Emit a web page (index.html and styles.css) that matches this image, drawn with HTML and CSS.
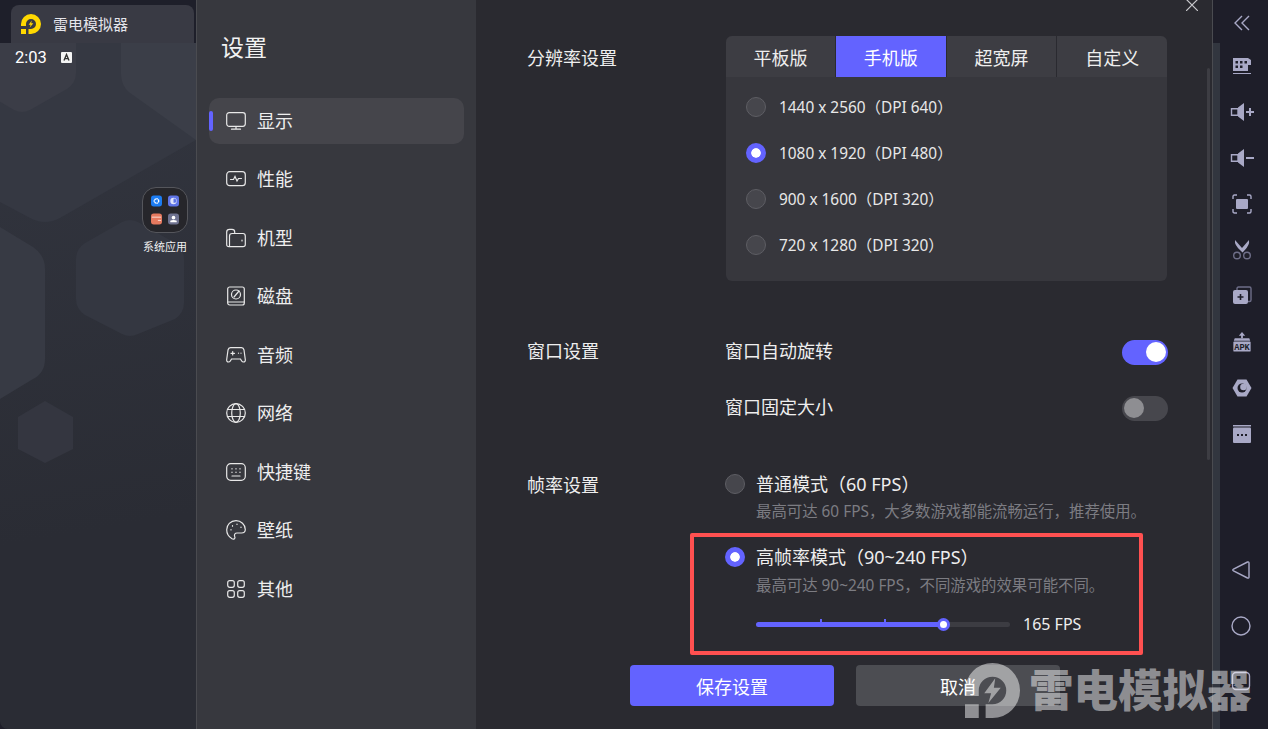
FILE: index.html
```html
<!DOCTYPE html>
<html lang="zh-CN">
<head>
  <meta charset="UTF-8">
  <title>雷电模拟器 设置</title>
  <link rel="stylesheet" href="styles.css">
</head>
<body>

<div class="app">

  <!-- android screen behind the dialog -->
  <div class="phone">
    <div class="phone-top">
      <div class="tab">
        <svg class="tab-logo" viewBox="0 0 20 20">
          <path fill="#ffd800" d="M0 12V10A10 10 0 1 1 10 20H7.5V15H10A5 5 0 1 0 5 10V12Z"/>
          <rect fill="#ffd800" x="0" y="15" width="5" height="5"/>
          <path fill="#ffd800" d="M10.8 6.5L7.6 10.8H9.6L8.8 13.6L12.4 9.2H10.2Z"/>
        </svg>
        <span>雷电模拟器</span>
      </div>
    </div>
    <div class="screen">
      <svg class="hexes" viewBox="0 0 196 686">
        <path fill="#353842" d="M-60 127L30 175Q45 183 60 175L196 97V-10H-60Z"/>
        <path fill="#3b3d47" d="M76 -10V30Q76 40 67 46L30 67Q22 71 14 67L-10 53V-10Z"/>
        <path fill="#3b3e48" d="M121 -10V30Q121 45 133 52L196 97V-10Z"/>
        <path fill="#373a44" d="M-10 178L33 204Q45 212 45 226V316Q45 330 33 336L-10 362Z"/>
        <path fill="#343741" d="M122 179Q130 175 138 179L175 200Q184 206 184 216V260Q184 270 175 276L138 291Q130 295 122 291L85 272Q76 266 76 256V216Q76 206 85 200Z"/>
        <path fill="#343640" d="M45 358L73 374V406L45 420L18 406V374Z"/>
      </svg>
      <div class="status">
        <span>2:03</span>
        <svg class="status-icon" viewBox="0 0 11 11">
          <rect width="11" height="11" rx="1" fill="#f4f4f4"/>
          <path fill="none" stroke="#333" stroke-width="1.4" d="M3 8.5L5.5 2.5L8 8.5M3.8 6.6H7.2"/>
        </svg>
      </div>
      <div class="folder">
        <div class="folder-box">
          <svg class="mini" viewBox="0 0 12 12"><rect width="12" height="12" rx="3" fill="#1c7cf2"/><circle cx="6" cy="6" r="2.400" fill="none" stroke="#fff" stroke-width="1.500" stroke-dasharray="1.500 .5"/></svg>
          <svg class="mini" viewBox="0 0 12 12"><rect width="12" height="12" rx="3" fill="#5f74e6"/><circle cx="6" cy="6" r="3.500" fill="#dfe4fb"/><path d="M6 3.500A2.500 2.500 0 0 1 8 8H6Z" fill="#5f74e6"/></svg>
          <svg class="mini" viewBox="0 0 12 12"><rect width="12" height="12" rx="3" fill="#e5795f"/><path d="M1 4H11M7.500 7.500H11" stroke="#fbe3dc" stroke-width="1"/></svg>
          <svg class="mini" viewBox="0 0 12 12"><rect width="12" height="12" rx="3" fill="#6e7290"/><circle cx="6" cy="4.500" r="2" fill="#fff"/><path d="M2.500 9.500H9.500V8Q6 6 2.500 8Z" fill="#fff"/></svg>
        </div>
        <span>系统应用</span>
      </div>
    </div>
  </div>

  <!-- settings nav -->
  <div class="side">
    <h2>设置</h2>
    <ul class="nav">
      <li class="nav-item active">
        <svg viewBox="0 0 20 20"><rect x="0.7" y="1.7" width="18.6" height="13.6" rx="2.5"/><path d="M10 15.5V18M5.5 18.2H14.500"/></svg>
        <span>显示</span>
      </li>
      <li class="nav-item">
        <svg viewBox="0 0 20 20"><rect x="0.7" y="2.7" width="18.6" height="14" rx="3"/><path d="M4.500 10.500H7.500L9 7.500L11 12L12.500 9.500H15.500"/></svg>
        <span>性能</span>
      </li>
      <li class="nav-item">
        <svg viewBox="0 0 20 20"><path d="M0.700 16.500V4Q0.700 1.300 3.500 1.300H6Q8.700 1.300 8.700 4V5.500H17Q19.300 5.500 19.300 8V16.500Q19.300 18.700 17 18.700H3Q0.700 18.700 0.700 16.500ZM3.500 18.700V8Q3.500 5.500 6 5.500H8.700M16 12V13"/></svg>
        <span>机型</span>
      </li>
      <li class="nav-item">
        <svg viewBox="0 0 20 20"><rect x="1.700" y="1" width="16.600" height="18" rx="2"/><path d="M1.700 16H18.300"/><circle cx="10" cy="8.500" r="4.500"/><path d="M8 11L13 5"/></svg>
        <span>磁盘</span>
      </li>
      <li class="nav-item">
        <svg viewBox="0 0 20 20"><path d="M4.500 2.700H15.500Q17.500 2.700 18 5L19.300 14.500Q19.500 17 17.500 17Q16.300 17 15.500 15.700L14.500 14H5.500L4.500 15.700Q3.700 17 2.500 17Q0.500 17 0.700 14.500L2 5Q2.500 2.700 4.500 2.700ZM5 8.300H8.500M6.700 6.500V10M12.500 8V8.200M15 8V8.200"/></svg>
        <span>音频</span>
      </li>
      <li class="nav-item">
        <svg viewBox="0 0 20 20"><circle cx="10" cy="10" r="9.300"/><ellipse cx="10" cy="10" rx="4.300" ry="9.300"/><path d="M1.500 6.500H18.500M1.500 13.500H18.500"/></svg>
        <span>网络</span>
      </li>
      <li class="nav-item">
        <svg viewBox="0 0 20 20"><rect x="0.700" y="1.700" width="18.600" height="16.600" rx="4"/><path d="M6 14H14M6 6.500V6.900M10 6.500V6.900M14 6.500V6.900M6 10V10.400M10 10V10.400M14 10V10.400"/></svg>
        <span>快捷键</span>
      </li>
      <li class="nav-item">
        <svg viewBox="0 0 20 20"><path d="M10 0.700C4.500 0.700 0.700 5 0.700 9.800C0.700 14 3 17 6 18.700C8 19.700 9.500 18.500 8.700 16.500C8 14.500 9 13 11 13H15.500C18 13 19.300 11.500 19.300 9.500C19.300 4.500 15 0.700 10 0.700Z"/><path d="M5 9.500V10M6.500 5.700V6.200M11 4V4.500M15 7V7.500"/></svg>
        <span>壁纸</span>
      </li>
      <li class="nav-item">
        <svg viewBox="0 0 20 20"><rect x="1.700" y="1.700" width="6.600" height="6.600" rx="2"/><rect x="11.700" y="1.700" width="6.600" height="6.600" rx="2"/><rect x="1.700" y="11.700" width="6.600" height="6.600" rx="2"/><rect x="11.700" y="11.700" width="6.600" height="6.600" rx="2"/></svg>
        <span>其他</span>
      </li>
    </ul>
  </div>

  <!-- settings content -->
  <div class="main">
    <svg class="close" viewBox="0 0 12 12"><path d="M0 0L12 12M12 0L0 12"/></svg>
    <div class="scroll"></div>

    <div class="section section-res">
      <div class="label">分辨率设置</div>
      <div class="panel">
        <div class="tabs">
          <div class="res-tab">平板版</div>
          <div class="res-tab current">手机版</div>
          <div class="res-tab">超宽屏</div>
          <div class="res-tab">自定义</div>
        </div>
        <div class="res-list">
          <div class="res-item"><i class="radio"></i><span>1440 x 2560（DPI 640）</span></div>
          <div class="res-item"><i class="radio on"></i><span>1080 x 1920（DPI 480）</span></div>
          <div class="res-item"><i class="radio"></i><span>900 x 1600（DPI 320）</span></div>
          <div class="res-item"><i class="radio"></i><span>720 x 1280（DPI 320）</span></div>
        </div>
      </div>
    </div>

    <div class="section section-win">
      <div class="label">窗口设置</div>
      <div class="switches">
        <div class="switch-row"><span>窗口自动旋转</span><i class="switch on"></i></div>
        <div class="switch-row"><span>窗口固定大小</span><i class="switch"></i></div>
      </div>
    </div>

    <div class="section section-fps">
      <div class="label">帧率设置</div>
      <div class="modes">
        <div class="mode">
          <i class="radio"></i>
          <div class="mode-body">
            <div class="mode-name">普通模式（60 FPS）</div>
            <div class="mode-desc">最高可达 60 FPS，大多数游戏都能流畅运行，推荐使用。</div>
          </div>
        </div>
        <div class="mode mode-high">
          <i class="radio on"></i>
          <div class="mode-body">
            <div class="mode-name">高帧率模式（90~240 FPS）</div>
            <div class="mode-desc">最高可达 90~240 FPS，不同游戏的效果可能不同。</div>
            <div class="slider-row">
              <div class="slider">
                <div class="slider-fill" style="width: 73.600%"></div>
                <i class="tick tick-1"></i>
                <i class="tick tick-2"></i>
                <i class="thumb" style="left: 73.600%"></i>
              </div>
              <span>165 FPS</span>
            </div>
          </div>
        </div>
      </div>
    </div>

    <div class="actions">
      <button class="btn btn-save">保存设置</button>
      <button class="btn btn-cancel">取消</button>
    </div>
  </div>

  <!-- emulator toolbar -->
  <div class="gutter"></div>
  <div class="toolbar">
    <div class="tools">
      <svg class="tool tool-line tool-collapse" viewBox="0 0 20 20"><path d="M10 3L3 10L10 17M17 3L10 10L17 17"/></svg>
      <svg class="tool" viewBox="0 0 20 20"><path d="M1 2H16L19 4V15H1Z"/><path fill="#1e1e29" d="M3.500 5H6V7.500H3.500ZM8 5H10.500V7.500H8ZM12.500 5H15V7.500H12.500ZM3.500 9.500H6V12H3.500ZM8 9.500H10.500V12H8ZM16 9H19V15H16Z"/><path d="M1 17H19V18H1Z"/></svg>
      <svg class="tool tool-wide" viewBox="0 0 24 20"><path d="M8 5.500L14 1V19L8 14.500Z"/><path class="thin" d="M1.500 6.700H8V13.300H1.500Z"/><path d="M16 9H19V6H21V9H24V11H21V14H19V11H16Z"/></svg>
      <svg class="tool tool-wide" viewBox="0 0 24 20"><path d="M8 5.500L14 1V19L8 14.500Z"/><path class="thin" d="M1.500 6.700H8V13.300H1.500Z"/><path d="M16 9H24V11H16Z"/></svg>
      <svg class="tool" viewBox="0 0 20 20"><path class="thin" d="M1 5V2.500Q1 1 2.500 1H5M15 1H17.500Q19 1 19 2.500V5M19 15V17.500Q19 19 17.500 19H15M5 19H2.500Q1 19 1 17.500V15"/><rect x="4" y="5" width="12" height="10" rx="1"/></svg>
      <svg class="tool" viewBox="0 0 20 20"><path d="M3 0L10 8L17 0Q18 5 12 11L10.500 12.500L9 11Q2 5 3 0Z"/><circle class="thin dim" cx="5" cy="15.500" r="3.300"/><circle class="thin dim" cx="15" cy="15.500" r="3.300"/></svg>
      <svg class="tool" viewBox="0 0 20 20"><path class="thin dim" d="M5 4V2.500Q5 1 6.500 1H17.500Q19 1 19 2.500V14Q19 15.500 17.500 15.500H16"/><rect x="1" y="4" width="15" height="14" rx="2"/><path fill="#1e1e29" d="M7.700 10.300V8H9.300V10.300H11.500V11.700H9.300V14H7.700V11.700H5.500V10.300Z"/></svg>
      <svg class="tool" viewBox="0 0 20 22"><path d="M10 0L13.500 4H11V7H9V4H6.500Z"/><path d="M2 7H18L19 9.500H1Z"/><rect x="0.500" y="10.500" width="19" height="11" rx="1"/><text class="apk" x="10" y="19.500" text-anchor="middle">APK</text></svg>
      <svg class="tool" viewBox="0 0 20 20"><path d="M5.500 1.500H14.500L19.500 10L14.500 18.500H5.500L0.500 10Z"/><circle cx="10" cy="10" r="4.500" fill="#1e1e29"/><circle cx="11.500" cy="9" r="3.300" fill="#a9a9c6"/></svg>
      <svg class="tool" viewBox="0 0 20 20"><path d="M1 1H19V2.500H1Z"/><rect x="1" y="3.500" width="18" height="15.500" rx="1"/><path fill="#1e1e29" d="M5 10H7V12H5ZM9 10H11V12H9ZM13 10H15V12H13Z"/></svg>
    </div>
    <div class="android-keys">
      <svg class="tool tool-line" viewBox="0 0 20 20"><path d="M16.500 2Q18 1.500 18 3V17Q18 18.500 16.500 18L2.500 11Q1 10 2.500 9Z"/></svg>
      <svg class="tool tool-line" viewBox="0 0 20 20"><circle cx="10" cy="10" r="9"/></svg>
      <svg class="tool tool-line" viewBox="0 0 20 20"><rect x="1.500" y="1.500" width="17" height="17" rx="3.500"/></svg>
    </div>
  </div>

  <!-- annotation and watermark painted over the screenshot -->
  <div class="highlight"></div>
  <div class="watermark">
    <svg class="wm-logo" viewBox="0 0 20 20">
      <path d="M0 12V10A10 10 0 1 1 10 20H7.500V15H10A5 5 0 1 0 5 10V12Z"/>
      <rect x="0" y="15" width="5" height="5"/>
      <path d="M11 5.500L7 11H9.500L8.500 14.500L13 9H10.500Z"/>
    </svg>
    <span>雷电模拟器</span>
  </div>
</div>

</body>
</html>
```

FILE: styles.css
```css
* {
  box-sizing: border-box;
}

body {
  margin: 0;
  background-color: #1e1e29;
  font-family: "Noto Sans", "Noto Sans CJK SC", sans-serif;
  color: #eeeeee;
  overflow: hidden;
}

i {
  display: block;
  flex: none;
}

.app {
  position: relative;
  display: flex;
  width: 1268px;
  height: 729px;
  overflow: hidden;
}

/* android screen */
.phone {
  width: 196px;
  flex: none;
  display: flex;
  flex-direction: column;
}

.phone-top {
  height: 43px;
  padding: 5px 2px 0 11px;
  background-color: #1e1f2a;
}

.tab {
  height: 38px;
  padding-left: 10px;
  display: flex;
  align-items: center;
  gap: 12px;
  background-color: #393a44;
  border-radius: 8px 8px 0 0;
  font-size: 15px;
  color: #e4e4ea;
}

.tab span {
  margin-top: -2px;
}

.tab-logo {
  width: 20px;
  height: 20px;
}

.screen {
  position: relative;
  flex: 1;
  background: linear-gradient(170deg, #333640, #2a2c34 70%);
  border-bottom-left-radius: 8px;
  overflow: hidden;
}

.hexes {
  position: absolute;
  left: 0;
  top: 0;
  width: 196px;
  height: 686px;
}

.status {
  position: relative;
  display: flex;
  align-items: center;
  gap: 14px;
  padding: 5px 0 0 15px;
  font-family: Roboto, sans-serif;
  font-size: 16.500px;
  line-height: 20px;
  color: #ffffff;
}

.status-icon {
  width: 11px;
  height: 11px;
  margin-top: -2px;
}

.folder {
  position: absolute;
  left: 134px;
  top: 144px;
  width: 62px;
  display: flex;
  flex-direction: column;
  align-items: center;
  font-size: 11px;
  line-height: 16px;
  color: #f0f0f0;
}

.folder-box {
  width: 46px;
  height: 46px;
  margin-bottom: 6px;
  padding: 7px 8px;
  display: grid;
  grid-template-columns: 11px 11px;
  grid-template-rows: 12px 12px;
  justify-content: space-between;
  align-content: space-between;
  background-color: #26262b;
  border: 1px solid #55565c;
  border-radius: 14px;
}

.mini {
  width: 11px;
  height: 12px;
}

/* settings nav */
.side {
  width: 280px;
  flex: none;
  padding: 0 12px 0 12px;
  background-color: #37383e;
  border-left: 1px solid #4a4b50;
}

.side h2 {
  margin: 0;
  padding: 31px 0 0 12px;
  font-size: 23px;
  line-height: 32px;
  font-weight: 400;
  color: #f2f2f2;
}

.nav {
  list-style: none;
  margin: 35px 0 0;
  padding: 0;
}

.nav-item {
  position: relative;
  height: 46px;
  margin-bottom: 12.500px;
  padding-left: 17px;
  display: flex;
  align-items: center;
  gap: 11px;
  font-size: 18px;
  color: #eeeeee;
  border-radius: 10px;
}

.nav-item span {
  margin-top: -3px;
}

.nav-item svg {
  width: 20px;
  height: 20px;
  margin-top: -1px;
  fill: none;
  stroke: #e8e8e8;
  stroke-width: 1.200;
  stroke-linecap: round;
}

.nav-item.active {
  background-color: #45454b;
}

.nav-item.active::before {
  content: "";
  position: absolute;
  left: 0;
  top: 13px;
  width: 4px;
  height: 20px;
  border-radius: 2px;
  background-color: #6363ff;
}

/* settings content */
.main {
  position: relative;
  width: 737px;
  flex: none;
  padding-left: 51px;
  background-color: #2a2a30;
  border-right: 1px solid #4a4b50;
}

.close {
  position: absolute;
  right: 14px;
  top: -1px;
  width: 12px;
  height: 12px;
  fill: none;
  stroke: #c8c8cc;
  stroke-width: 1.200;
}

.scroll {
  position: absolute;
  right: 2px;
  top: 68px;
  width: 3px;
  height: 392px;
  border-radius: 2px;
  background-color: #3d3d43;
}

.section {
  display: flex;
}

.section-res {
  padding-top: 36px;
}

.section-win {
  padding-top: 58px;
}

.section-fps {
  padding-top: 20px;
}

.label {
  width: 199px;
  flex: none;
  font-size: 18px;
  line-height: 26px;
  color: #eeeeee;
}

.section-res .label {
  padding-top: 9px;
}

.section-win .label {
  margin-top: -1px;
}

.section-fps .label {
  padding-top: 1px;
}

.panel {
  width: 441px;
  height: 245px;
  background-color: #37373d;
  border-radius: 6px;
  overflow: hidden;
}

.tabs {
  height: 41px;
  display: flex;
  gap: 1px;
  background-color: #2a2a30;
}

.res-tab {
  flex: 1;
  display: flex;
  align-items: center;
  justify-content: center;
  background-color: #3d3d43;
  font-size: 18px;
  color: #eeeeee;
}

.res-tab:first-child {
  flex: 0 0 109px;
}

.res-tab.current {
  background-color: #6363ff;
  color: #ffffff;
}

.res-list {
  padding-top: 7px;
}

.res-item {
  height: 46px;
  padding-left: 20px;
  display: flex;
  align-items: center;
  gap: 13px;
  font-size: 15.400px;
  color: #e8e8e8;
}

.res-item span {
  margin-top: -2px;
}

.radio {
  width: 20px;
  height: 20px;
  border-radius: 50%;
  background-color: #46464c;
  border: 1px solid #5e5e64;
}

.radio.on {
  background-color: #6363ff;
  border: 5px solid #6363ff;
  background-clip: border-box;
  box-shadow: inset 0 0 0 6px #ffffff;
}

.switches {
  width: 443px;
  margin-left: -1px;
}

.switch-row {
  height: 26px;
  margin-bottom: 30px;
  display: flex;
  align-items: center;
  justify-content: space-between;
  font-size: 18px;
}

.switch-row span {
  margin-top: -4px;
}

.switch {
  position: relative;
  width: 46px;
  height: 25px;
  border-radius: 13px;
  background-color: #47474d;
}

.switch::after {
  content: "";
  position: absolute;
  left: 2px;
  top: 2.500px;
  width: 20px;
  height: 20px;
  border-radius: 50%;
  background-color: #8e8e92;
}

.switch.on {
  background-color: #6363ff;
}

.switch.on::after {
  left: 24px;
  background-color: #ffffff;
}

.modes {
  width: 440px;
  margin-left: -1px;
}

.mode {
  display: flex;
  gap: 11px;
}

.mode .radio {
  margin-top: 3px;
}

.mode-high {
  margin-top: 22px;
}

.mode-name {
  font-size: 18px;
  line-height: 26px;
  color: #eeeeee;
}

.mode-desc {
  margin-top: 5px;
  font-size: 15.400px;
  line-height: 20px;
  color: #7c7c82;
}

.mode-high .mode-desc {
  margin-top: 6px;
}

.slider-row {
  margin-top: 18px;
  display: flex;
  align-items: center;
  gap: 13px;
  font-size: 16px;
  line-height: 20px;
}

.slider {
  position: relative;
  width: 254px;
  height: 5px;
  border-radius: 3px;
  background-color: #3c3c42;
}

.slider-fill {
  height: 5px;
  border-radius: 3px;
  background-color: #6363ff;
}

.tick {
  position: absolute;
  top: -3px;
  width: 1.500px;
  height: 3px;
  background-color: #6363ff;
}

.tick-1 {
  left: 64px;
}

.tick-2 {
  left: 128px;
}

.thumb {
  position: absolute;
  top: -4px;
  width: 13px;
  height: 13px;
  margin-left: -6px;
  border-radius: 50%;
  background-color: #ffffff;
  border: 3px solid #6363ff;
}

.actions {
  position: absolute;
  left: 154px;
  top: 665px;
  display: flex;
  gap: 22px;
}

.btn {
  width: 204px;
  height: 41px;
  padding: 0;
  border: none;
  border-radius: 4px;
  font-family: inherit;
  font-size: 18px;
  color: #ffffff;
}

.btn-save {
  background-color: #6363ff;
}

.btn-cancel {
  background-color: #4c4d52;
}

/* emulator toolbar */
.gutter {
  width: 7px;
  flex: none;
  margin-top: 43px;
  background-color: #32363f;
}

.toolbar {
  position: relative;
  flex: 1;
  display: flex;
  flex-direction: column;
  justify-content: space-between;
  padding: 13px 0 38px;
  background-color: #1e1e29;
  border-top-right-radius: 8px;
}

.tools,
.android-keys {
  display: flex;
  flex-direction: column;
  align-items: center;
}

.tools {
  gap: 26px;
  margin-left: -4px;
}

.android-keys {
  gap: 35.500px;
  margin-left: -6px;
}

.tool {
  width: 20px;
  height: 20px;
  fill: #a9a9c6;
}

.tool-collapse {
  margin-bottom: -3px;
}

.tool-wide {
  width: 24px;
}

.tool-line {
  fill: none;
  stroke: #a9a9c6;
  stroke-width: 1.400;
}

.thin {
  fill: none;
  stroke: #a9a9c6;
  stroke-width: 1.400;
}

.dim {
  stroke: #6e6e88;
}

.apk {
  font-family: "Liberation Mono", monospace;
  font-size: 9.500px;
  font-weight: 700;
  fill: #1e1e29;
}

/* overlays */
.highlight {
  position: absolute;
  left: 690px;
  top: 533px;
  width: 453px;
  height: 122px;
  border: 4px solid #ff5050;
  border-radius: 2px;
}

.watermark {
  position: absolute;
  left: 965px;
  top: 662px;
  display: flex;
  align-items: center;
  gap: 9px;
  color: rgba(255, 255, 255, 0.48);
  font-size: 44.500px;
  line-height: 56px;
  font-weight: 900;
}

.wm-logo {
  width: 55px;
  height: 55px;
  fill: rgba(255, 255, 255, 0.48);
}
```
